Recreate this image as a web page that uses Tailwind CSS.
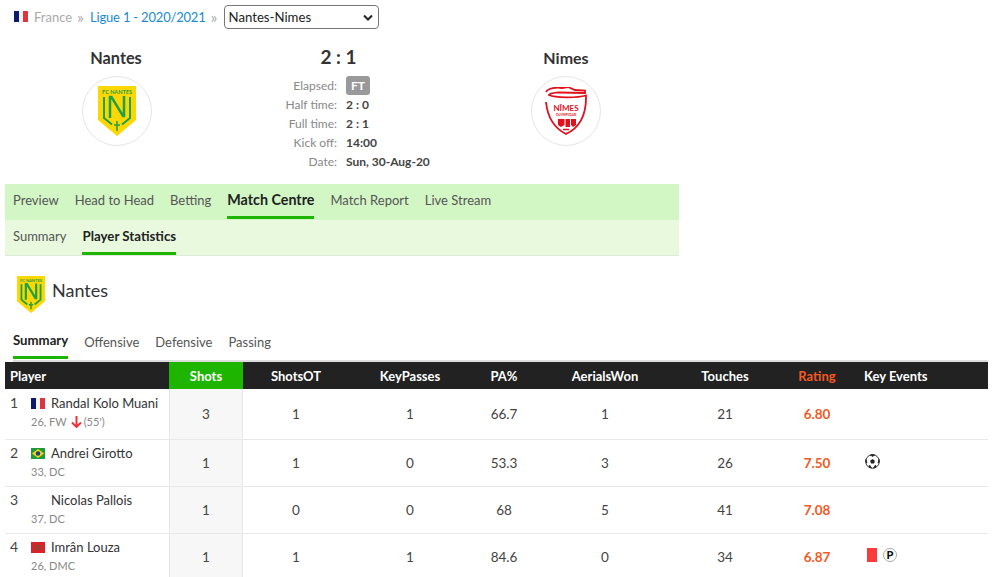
<!DOCTYPE html>
<html lang="en">

<head>
    <meta charset="UTF-8">
    <title>Nantes-Nimes</title>
    <script src="https://cdn.jsdelivr.net/npm/@tailwindcss/browser@4"></script>
</head>

<body class="bg-white h-[577px] overflow-hidden font-['Lato',sans-serif] text-[13px] text-[#444]">
    <!-- breadcrumb -->
    <div class="h-[34px] pl-[14px] pt-[5px] flex items-start gap-[5px] text-[13px] leading-[24px]">
        <svg class="w-[14px] h-[11px] mt-[6px] mr-[1px]" viewBox="0 0 14 11"><rect width="5" height="11" fill="#0a1a6e"/><rect x="5" width="4" height="11" fill="#f4f4f4"/><rect x="9" width="5" height="11" fill="#e0343c"/></svg>
        <span class="text-[#aaa]">France</span>
        <span class="text-[#aaa] text-[16px] w-[8px]">»</span>
        <span class="text-[#1a8ad4] tracking-[-0.2px]">Ligue 1 - 2020/2021</span>
        <span class="text-[#aaa] text-[16px] w-[8px]">»</span>
        <div class="w-[155px] h-[24px] border border-[#767676] rounded-[4px] pl-[4px] pr-[5px] flex items-center justify-between text-[13.2px] text-[#222]">
            <span>Nantes-Nimes</span>
            <svg class="w-[10px] h-[7px]" viewBox="0 0 10 7" fill="none" stroke="#222" stroke-width="2"><path d="M1 1.5l4 4 4-4"/></svg>
        </div>
    </div>

    <!-- match header -->
    <div class="h-[150px] w-[681px] flex">
        <div class="w-[234px] pt-[13px] flex flex-col items-center">
            <div class="text-[16.3px] font-bold leading-[22px] text-[#333] pr-[2px]">Nantes</div>
            <div class="mt-[7px] w-[70px] h-[70px] rounded-full border border-[#e5e5e5] flex items-center justify-center">
                <svg class="w-[38px] h-[50px]" viewBox="0 0 38 50">
                    <path d="M0 0H38V34L19 50L0 34Z" fill="#fdd800"/>
                    <text x="19" y="7.500" text-anchor="middle" font-size="5.500" font-weight="700" fill="#1fa04a" font-family="Lato, sans-serif">FC NANTES</text>
                    <path d="M6 11V32L14 38.500M32 11V32L24 38.500" fill="none" stroke="#1fa04a" stroke-width="2"/>
                    <path d="M12 32V11H13.500L25 30H26V10" fill="none" stroke="#1fa04a" stroke-width="2.500"/>
                    <path d="M19 35V45M16 39H22" fill="none" stroke="#1fa04a" stroke-width="1.500"/>
                </svg>
            </div>
        </div>
        <div class="w-[217px] pt-[11px] flex flex-col">
            <div class="text-center text-[19px] font-bold leading-[24px] text-[#333] pr-[8px]">2 : 1</div>
            <div class="mt-[7px] grid grid-cols-[103px_1fr] gap-x-[9px] text-[12px] leading-[19px]">
                <div class="text-right text-[#888]">Elapsed:</div>
                <div><span class="inline-block w-[24px] h-[19px] bg-[#999] rounded-[3px] text-white font-bold text-center">FT</span></div>
                <div class="text-right text-[#888]">Half time:</div>
                <div class="font-bold">2 : 0</div>
                <div class="text-right text-[#888]">Full time:</div>
                <div class="font-bold">2 : 1</div>
                <div class="text-right text-[#888]">Kick off:</div>
                <div class="font-bold">14:00</div>
                <div class="text-right text-[#888]">Date:</div>
                <div class="font-bold whitespace-nowrap">Sun, 30-Aug-20</div>
            </div>
        </div>
        <div class="w-[230px] pt-[13px] flex flex-col items-center">
            <div class="text-[16px] font-bold leading-[22px] text-[#333]">Nimes</div>
            <div class="mt-[7px] w-[70px] h-[70px] rounded-full border border-[#e5e5e5] flex items-center justify-center">
                <svg class="w-[42px] h-[48px]" viewBox="0 0 42 48">
                    <path d="M1 5C3 1 12 0 17 1L23 0L30 3L40 3.500V6L14 5.500C9 6 5 6 4 8C10 11 32 11 41 8.500C41.500 28 34 41 21 47C9 41 2.500 30 1 15" fill="none" stroke="#e0101c" stroke-width="1.800"/>
                    <text x="21" y="24" text-anchor="middle" font-size="8" font-weight="700" fill="#e0101c" font-family="Lato, sans-serif">NÎMES</text>
                    <text x="21" y="29" text-anchor="middle" font-size="3.500" font-weight="700" fill="#e0101c" font-family="Lato, sans-serif">OLYMPIQUE</text>
                    <path d="M13 32H19.500V38L16 40L13 38ZM20.500 32H25V40H20.500ZM26 32H31V38L28 40L26 38Z" fill="#e0101c"/>
                    <path d="M18 42.500H24" stroke="#e0101c" stroke-width="1.500"/>
                </svg>
            </div>
        </div>
    </div>

    <!-- tabs -->
    <div class="ml-[5px] w-[674px] h-[36px] bg-[#d3f6c5] flex gap-[16px] pl-[8px] text-[13px] text-[#555]">
        <div class="leading-[32px]">Preview</div>
        <div class="leading-[32px]">Head to Head</div>
        <div class="leading-[32px]">Betting</div>
        <div class="h-[35px] leading-[32px] text-[14.300px] font-bold text-[#222] border-b-[3px] border-[#1eb500]">Match Centre</div>
        <div class="leading-[32px]">Match Report</div>
        <div class="leading-[32px]">Live Stream</div>
    </div>
    <div class="ml-[5px] w-[674px] h-[36px] bg-[#e8f9de] border-b border-[#e0eadb] flex gap-[16px] pl-[8px] text-[13px] text-[#555]">
        <div class="leading-[32px]">Summary</div>
        <div class="h-[35px] leading-[32px] text-[13.300px] font-bold text-[#222] border-b-[3px] border-[#1eb500]">Player Statistics</div>
    </div>

    <!-- team title -->
    <div class="h-[72px] pl-[17px] pt-[20px] flex items-start gap-[7px]">
        <svg class="w-[28px] h-[37px]" viewBox="0 0 38 50">
            <path d="M0 0H38V34L19 50L0 34Z" fill="#fdd800"/>
            <text x="19" y="7.500" text-anchor="middle" font-size="5.500" font-weight="700" fill="#1fa04a" font-family="Lato, sans-serif">FC NANTES</text>
            <path d="M6 11V32L14 38.500M32 11V32L24 38.500" fill="none" stroke="#1fa04a" stroke-width="2.500"/>
            <path d="M12 32V11H13.500L25 30H26V10" fill="none" stroke="#1fa04a" stroke-width="3"/>
            <path d="M19 35V45M16 39H22" fill="none" stroke="#1fa04a" stroke-width="2"/>
        </svg>
        <div class="text-[18px] leading-[28px] text-[#333]">Nantes</div>
    </div>

    <!-- stat tabs -->
    <div class="h-[31px] pl-[13px] flex gap-[16px] text-[13px] text-[#555]">
        <div class="h-[31px] leading-[24px] text-[13.200px] font-bold text-[#222] border-b-[3px] border-[#1eb500]">Summary</div>
        <div class="leading-[28px]">Offensive</div>
        <div class="leading-[28px]">Defensive</div>
        <div class="leading-[28px]">Passing</div>
    </div>
    <div class="ml-[13px] w-[975px] h-[2px] mt-[1px] bg-[#ddd]"></div>

    <!-- stats table -->
    <div class="ml-[5px] w-[983px] text-[13.5px]">
        <div class="grid grid-cols-[164px_74px_106px_122px_66px_136px_104px_80px_131px] h-[27px] bg-[#222] text-white font-bold text-[13px] leading-[28px] text-center">
            <div class="text-left pl-[5px]">Player</div>
            <div class="bg-[#1eb500]">Shots</div>
            <div>ShotsOT</div>
            <div>KeyPasses</div>
            <div>PA%</div>
            <div>AerialsWon</div>
            <div>Touches</div>
            <div class="text-[#f4591f]">Rating</div>
            <div class="text-left pl-[7px]">Key Events</div>
        </div>

        <div class="grid grid-cols-[164px_74px_106px_122px_66px_136px_104px_80px_131px] h-[51px] border-b border-[#e8e8e8] items-stretch text-center">
            <div class="flex text-left pl-[5px] pt-[5px]">
                <div class="w-[21px] leading-[18px] text-[14px]">1</div>
                <div>
                    <div class="flex items-center gap-[6px] text-[13px] leading-[18px] text-[#333]">
                        <svg class="w-[14px] h-[11px]" viewBox="0 0 14 11"><rect width="5" height="11" fill="#0a1a6e"/><rect x="5" width="4" height="11" fill="#f4f4f4"/><rect x="9" width="5" height="11" fill="#e0343c"/></svg>
                        <span class="whitespace-nowrap">Randal Kolo Muani</span>
                    </div>
                    <div class="flex items-center gap-[2px] mt-[1px] text-[11px] leading-[18px] text-[#888]">
                        <span>26, FW</span>
                        <svg class="w-[11px] h-[12px] ml-[2px]" viewBox="0 0 11 12" fill="none" stroke="#f0323c" stroke-width="2"><path d="M5.500 0V11M1 6.500l4.500 4.500 4.500-4.500"/></svg>
                        <span>(55')</span>
                    </div>
                </div>
            </div>
            <div class="bg-[#f7f7f7] border-x border-[#e8e8e8] leading-[50px]">3</div>
            <div class="leading-[50px]">1</div>
            <div class="leading-[50px]">1</div>
            <div class="leading-[50px]">66.7</div>
            <div class="leading-[50px]">1</div>
            <div class="leading-[50px]">21</div>
            <div class="leading-[50px] font-bold text-[#f4591f]">6.80</div>
            <div></div>
        </div>

        <div class="grid grid-cols-[164px_74px_106px_122px_66px_136px_104px_80px_131px] h-[47px] border-b border-[#e8e8e8] text-center">
            <div class="flex text-left pl-[5px] pt-[4px]">
                <div class="w-[21px] leading-[18px] text-[14px]">2</div>
                <div>
                    <div class="flex items-center gap-[6px] text-[13px] leading-[18px] text-[#333]">
                        <svg class="w-[14px] h-[11px]" viewBox="0 0 14 11"><rect width="14" height="11" fill="#1f9a3c"/><path d="M7 1l6 4.500-6 4.500-6-4.500z" fill="#f5d90a"/><circle cx="7" cy="5.500" r="2.300" fill="#1d3f8f"/></svg>
                        <span class="whitespace-nowrap">Andrei Girotto</span>
                    </div>
                    <div class="mt-[1px] text-[11px] leading-[18px] text-[#888]">33, DC</div>
                </div>
            </div>
            <div class="bg-[#f7f7f7] border-x border-[#e8e8e8] leading-[46px]">1</div>
            <div class="leading-[46px]">1</div>
            <div class="leading-[46px]">0</div>
            <div class="leading-[46px]">53.3</div>
            <div class="leading-[46px]">3</div>
            <div class="leading-[46px]">26</div>
            <div class="leading-[46px] font-bold text-[#f4591f]">7.50</div>
            <div class="text-left pl-[8px] pt-[14px]">
                <svg class="w-[15px] h-[15px]" viewBox="0 0 15 15"><circle cx="7.500" cy="7.500" r="6.800" fill="#fff" stroke="#333" stroke-width="1"/><path d="M7.500 5l2.400 1.800-.9 2.800H6l-.9-2.800z" fill="#222"/><path d="M5.500 1L7.500 2.500 9.500 1 7.500.500zM1 5.500L2 9 .7 8zM14 5.500L13 9 14.300 8zM4 13L6.500 13.800 4.500 11zM11 13L8.500 13.800 10.500 11z" fill="#222" stroke="#222" stroke-width="0.800"/></svg>
            </div>
        </div>

        <div class="grid grid-cols-[164px_74px_106px_122px_66px_136px_104px_80px_131px] h-[47px] border-b border-[#e8e8e8] text-center">
            <div class="flex text-left pl-[5px] pt-[4px]">
                <div class="w-[21px] leading-[18px] text-[14px]">3</div>
                <div>
                    <div class="pl-[20px] text-[13px] leading-[18px] text-[#333] whitespace-nowrap">Nicolas Pallois</div>
                    <div class="mt-[1px] text-[11px] leading-[18px] text-[#888]">37, DC</div>
                </div>
            </div>
            <div class="bg-[#f7f7f7] border-x border-[#e8e8e8] leading-[46px]">1</div>
            <div class="leading-[46px]">0</div>
            <div class="leading-[46px]">0</div>
            <div class="leading-[46px]">68</div>
            <div class="leading-[46px]">5</div>
            <div class="leading-[46px]">41</div>
            <div class="leading-[46px] font-bold text-[#f4591f]">7.08</div>
            <div></div>
        </div>

        <div class="grid grid-cols-[164px_74px_106px_122px_66px_136px_104px_80px_131px] h-[47px] text-center">
            <div class="flex text-left pl-[5px] pt-[4px]">
                <div class="w-[21px] leading-[18px] text-[14px]">4</div>
                <div>
                    <div class="flex items-center gap-[6px] text-[13px] leading-[18px] text-[#333]">
                        <svg class="w-[14px] h-[11px]" viewBox="0 0 14 11"><rect width="14" height="11" fill="#d8232a"/><circle cx="7" cy="5.500" r="2" fill="none" stroke="#1f7a3c" stroke-width="0.800"/></svg>
                        <span class="whitespace-nowrap">Imrân Louza</span>
                    </div>
                    <div class="mt-[1px] text-[11px] leading-[18px] text-[#888]">26, DMC</div>
                </div>
            </div>
            <div class="bg-[#f7f7f7] border-x border-[#e8e8e8] leading-[46px]">1</div>
            <div class="leading-[46px]">1</div>
            <div class="leading-[46px]">1</div>
            <div class="leading-[46px]">84.6</div>
            <div class="leading-[46px]">0</div>
            <div class="leading-[46px]">34</div>
            <div class="leading-[46px] font-bold text-[#f4591f]">6.87</div>
            <div class="flex items-start gap-[6px] pl-[10px] pt-[14px]">
                <div class="w-[10px] h-[14px] bg-[#f83c3c]"></div>
                <div class="w-[14px] h-[14px] rounded-full border border-[#aaa] text-[11px] leading-[12px] font-black text-[#111] text-center">P</div>
            </div>
        </div>
    </div>
</body>

</html>
